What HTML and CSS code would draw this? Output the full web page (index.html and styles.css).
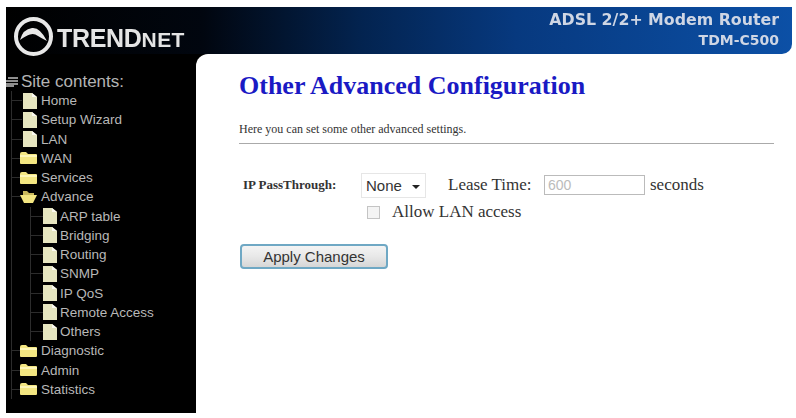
FILE: index.html
```html
<!DOCTYPE html>
<html>

<head>
    <title>Other Advanced Configuration</title>
    <link rel="stylesheet" href="styles.css">
</head>

<body>
    <svg class="icon-defs" width="0" height="0">
        <symbol id="page" viewBox="0 0 14 16">
            <path d="M0 0h9l5 4v12H0z" fill="#e6e5bf" />
            <path d="M9 0l5 4H9z" fill="#fbfaf0" />
        </symbol>
        <symbol id="folder" viewBox="0 0 17 12">
            <path d="M0 2q0-2 2-2h4l2 2h8q1 0 1 1v8q0 1-1 1H1q-1 0-1-1z" fill="#f3e681" />
            <path d="M0 3h17v2H0z" fill="#fdf6b8" />
        </symbol>
        <symbol id="folder-open" viewBox="0 0 17 12">
            <path d="M3 0h4l2 2h5v3H3z" fill="#c9b95c" />
            <path d="M0 4h17l-4 8H4z" fill="#f3e681" />
        </symbol>
    </svg>

    <div class="frame">
        <div class="banner">
            <div class="logo">
                <svg class="logo-mark" viewBox="0 0 39 39">
                    <circle cx="19.5" cy="19.5" r="17.5" fill="none" stroke="#e8e8e8" stroke-width="4" />
                    <path d="M6 23q3-11 12-12q8-1 15 13q-6-3-9-5q-4-3-8-1.500q-4 1-10 5.500z" fill="#e8e8e8" />
                </svg>
                <span class="logo-text">TREND<span class="logo-net">NET</span></span>
            </div>
            <div class="product">
                <div class="product-name">ADSL 2/2+ Modem Router</div>
                <div>TDM-C500</div>
            </div>
        </div>

        <div class="columns">
            <div class="sidebar">
                <div class="tree-title">
                    <svg class="root-icon" viewBox="0 0 12 10">
                        <path d="M2 0h10v2H2zM0 3h12v2H0zM0 6h12v2H0zM0 8h8v2H0z" fill="#8f8f8f" />
                    </svg>
                    Site contents:
                </div>
                <ul class="tree">
                    <li><span class="dash"></span><svg class="i-page"><use href="#page" /></svg>Home</li>
                    <li><span class="dash"></span><svg class="i-page"><use href="#page" /></svg>Setup Wizard</li>
                    <li><span class="dash"></span><svg class="i-page"><use href="#page" /></svg>LAN</li>
                    <li><span class="dash"></span><svg class="i-folder"><use href="#folder" /></svg>WAN</li>
                    <li><span class="dash"></span><svg class="i-folder"><use href="#folder" /></svg>Services</li>
                    <li><span class="dash"></span><svg class="i-folder"><use href="#folder-open" /></svg>Advance</li>
                    <ul class="tree sub">
                        <li><span class="dash"></span><svg class="i-page"><use href="#page" /></svg>ARP table</li>
                        <li><span class="dash"></span><svg class="i-page"><use href="#page" /></svg>Bridging</li>
                        <li><span class="dash"></span><svg class="i-page"><use href="#page" /></svg>Routing</li>
                        <li><span class="dash"></span><svg class="i-page"><use href="#page" /></svg>SNMP</li>
                        <li><span class="dash"></span><svg class="i-page"><use href="#page" /></svg>IP QoS</li>
                        <li><span class="dash"></span><svg class="i-page"><use href="#page" /></svg>Remote Access</li>
                        <li><span class="dash"></span><svg class="i-page"><use href="#page" /></svg>Others</li>
                    </ul>
                    <li><span class="dash"></span><svg class="i-folder"><use href="#folder" /></svg>Diagnostic</li>
                    <li><span class="dash"></span><svg class="i-folder"><use href="#folder" /></svg>Admin</li>
                    <li><span class="dash"></span><svg class="i-folder"><use href="#folder" /></svg>Statistics</li>
                </ul>
            </div>

            <div class="content">
                <h1>Other Advanced Configuration</h1>
                <p class="intro">Here you can set some other advanced settings.</p>
                <hr>
                <form>
                    <div class="form-row">
                        <label class="field-name">IP PassThrough:</label>
                        <span class="select-box">None <span class="arrow"></span></span>
                        <span class="lease">Lease Time:</span>
                        <input class="lease-input" type="text" value="600" disabled>
                        <span>seconds</span>
                    </div>
                    <div class="check-row">
                        <span class="check"></span>
                        <span>Allow LAN access</span>
                    </div>
                    <button class="apply" type="button">Apply Changes</button>
                </form>
            </div>
        </div>
    </div>
</body>

</html>
```

FILE: styles.css
```css
body {
    margin: 0;
    height: 418px;
    overflow: hidden;
    background-color: #fff;
    padding: 7px 4px 5px 6px;
    box-sizing: border-box;
    filter: blur(0.5px);
}

.icon-defs {
    display: block;
}

.frame {
    height: 100%;
    display: flex;
    flex-direction: column;
}

.banner {
    position: relative;
    height: 47px;
    flex: none;
    display: flex;
    justify-content: space-between;
    background: linear-gradient(to right, #000 0, #01060f 25%, #03234f 45%, #07397f 65%, #0c50a6 100%);
    border-bottom-right-radius: 10px;
    font-family: "DejaVu Sans", sans-serif;
}

.logo {
    display: flex;
    align-items: center;
    align-self: flex-start;
    padding: 10px 0 0 8px;
}

.logo-mark {
    width: 39px;
    height: 39px;
}

.logo-text {
    margin: 3px 0 0 4px;
    font-family: "Liberation Sans", sans-serif;
    font-weight: bold;
    font-size: 25px;
    letter-spacing: -0.3px;
    color: #e4e4e4;
}

.logo-net {
    font-size: 21px;
    letter-spacing: 0.4px;
}

.product {
    padding: 3px 13px 0 0;
    text-align: right;
    font-weight: bold;
    font-size: 14px;
    line-height: 20px;
    color: #cfd6e4;
}

.product-name {
    font-size: 15.8px;
}

.columns {
    flex: 1;
    display: flex;
    background-color: #000;
}

.sidebar {
    width: 190px;
    flex: none;
    padding-top: 18px;
    color: #b8b8b8;
    font-family: "Liberation Sans", sans-serif;
    font-size: 13.5px;
}

.tree-title {
    display: flex;
    align-items: center;
    font-size: 17px;
    line-height: 19px;
    color: #b4b4b4;
}

.root-icon {
    width: 12px;
    height: 10px;
    margin-right: 3px;
    flex: none;
}

.tree {
    list-style: none;
    margin: 0 0 0 5px;
    padding: 0;
    border-left: 1px solid #2c2c2c;
}

.tree li {
    display: flex;
    align-items: center;
    height: 19.25px;
}

.tree.sub {
    margin-left: 18px;
}

.dash {
    width: 10px;
    height: 1px;
    flex: none;
    background-color: #2c2c2c;
}

.i-page {
    width: 14px;
    height: 16px;
    margin: 0 4px 0 1px;
    flex: none;
}

.sub .dash {
    width: 12px;
}

.sub .i-page {
    margin: 0 3px 0 0;
}

.i-folder {
    width: 17px;
    height: 12px;
    margin: 0 4px 0 -2px;
    flex: none;
}

.content {
    flex: 1;
    background-color: #fff;
    border-top-left-radius: 12px;
    padding: 17px 18px 0 43px;
    font-family: "Liberation Serif", serif;
    color: #333;
}

h1 {
    margin: 0;
    font-size: 26px;
    line-height: 30px;
    color: #1a1ac4;
}

.intro {
    margin: 21px 0 0;
    font-size: 12px;
    line-height: 14px;
}

hr {
    margin: 7px 0 0;
    border: 0;
    height: 1px;
    background-color: #aaa;
}

form {
    font-size: 17px;
}

.form-row {
    display: flex;
    align-items: center;
    margin-top: 28px;
    height: 26px;
}

.field-name {
    width: 122px;
    padding-left: 4px;
    box-sizing: border-box;
    font-size: 13px;
    font-weight: bold;
}

.select-box {
    width: 65px;
    height: 25px;
    box-sizing: border-box;
    padding-left: 4px;
    display: flex;
    align-items: center;
    font-family: "Liberation Sans", sans-serif;
    font-size: 15px;
    border: 1px solid #e6e6e6;
}

.arrow {
    margin-left: 10px;
    margin-top: 3px;
    border-left: 4px solid transparent;
    border-right: 4px solid transparent;
    border-top: 4px solid #222;
}

.lease {
    margin-left: 22px;
    width: 96px;
}

.lease-input {
    width: 101px;
    height: 20px;
    box-sizing: border-box;
    margin: 0 5px 0 0;
    padding: 0 3px;
    border: 1px solid #bbb;
    background-color: #fff;
    color: #bbb;
    font-family: "Liberation Sans", sans-serif;
    font-size: 14px;
}

.check-row {
    display: flex;
    align-items: center;
    height: 22px;
    margin-top: 3px;
    padding-left: 128px;
}

.check {
    width: 11px;
    height: 11px;
    margin-right: 12px;
    border: 1px solid #c4c4c4;
    background-color: #f4f4f4;
}

.apply {
    display: block;
    width: 148px;
    height: 25px;
    margin: 21px 0 0 1px;
    padding: 0;
    border: 2px solid #6fa8c4;
    border-radius: 4px;
    background: linear-gradient(to bottom, #f4f4f4 0, #e8e8e8 50%, #d6d6d6 100%);
    color: #333;
    font-family: "Liberation Sans", sans-serif;
    font-size: 15px;
}
```
